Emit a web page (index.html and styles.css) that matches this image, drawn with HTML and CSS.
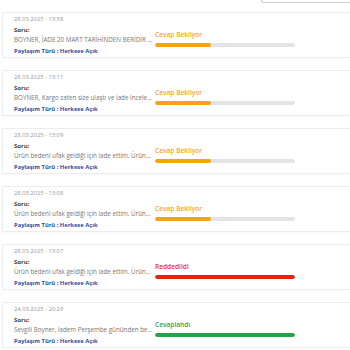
FILE: index.html
```html
<!DOCTYPE html>
<html lang="tr">
<head>
  <meta charset="UTF-8" />
  <meta name="viewport" content="width=device-width, initial-scale=1.0"/>
  <title>Sorularım</title>
  <link rel="stylesheet" href="styles.css">
</head>
<body>
  <div class="toolbar">
    <div class="search-box"></div>
  </div>

  <div class="question-list">
    <div class="question-card">
      <div class="question-info">
        <div class="date">28.03.2025 - 13:58</div>
        <div class="label">Soru:</div>
        <div class="text">BOYNER, İADE 20 MART TARİHİNDEN BERİDİR BEKLEMEDE</div>
        <div class="share">Paylaşım Türü : Herkese Açık</div>
      </div>
      <div class="status waiting">
        <div class="status-name">Cevap Bekliyor</div>
        <div class="progress"><div class="fill"></div></div>
      </div>
    </div>

    <div class="question-card">
      <div class="question-info">
        <div class="date">28.03.2025 - 13:11</div>
        <div class="label">Soru:</div>
        <div class="text">BOYNER, Kargo zaten size ulaştı ve iade incelemesi yapılmadı</div>
        <div class="share">Paylaşım Türü : Herkese Açık</div>
      </div>
      <div class="status waiting">
        <div class="status-name">Cevap Bekliyor</div>
        <div class="progress"><div class="fill"></div></div>
      </div>
    </div>

    <div class="question-card">
      <div class="question-info">
        <div class="date">28.03.2025 - 13:09</div>
        <div class="label">Soru:</div>
        <div class="text">Ürün bedeni ufak geldiği için iade ettim. Ürünün iadesi onaylanmadı</div>
        <div class="share">Paylaşım Türü : Herkese Açık</div>
      </div>
      <div class="status waiting">
        <div class="status-name">Cevap Bekliyor</div>
        <div class="progress"><div class="fill"></div></div>
      </div>
    </div>

    <div class="question-card">
      <div class="question-info">
        <div class="date">28.03.2025 - 13:08</div>
        <div class="label">Soru:</div>
        <div class="text">Ürün bedeni ufak geldiği için iade ettim. Ürünün iadesi onaylanmadı</div>
        <div class="share">Paylaşım Türü : Herkese Açık</div>
      </div>
      <div class="status waiting">
        <div class="status-name">Cevap Bekliyor</div>
        <div class="progress"><div class="fill"></div></div>
      </div>
    </div>

    <div class="question-card">
      <div class="question-info">
        <div class="date">28.03.2025 - 13:07</div>
        <div class="label">Soru:</div>
        <div class="text">Ürün bedeni ufak geldiği için iade ettim. Ürünün iadesi onaylanmadı</div>
        <div class="share">Paylaşım Türü : Herkese Açık</div>
      </div>
      <div class="status rejected">
        <div class="status-name">Reddedildi</div>
        <div class="progress"><div class="fill"></div></div>
      </div>
    </div>

    <div class="question-card">
      <div class="question-info">
        <div class="date">24.03.2025 - 20:29</div>
        <div class="label">Soru:</div>
        <div class="text">Sevgili Boyner, iadem Perşembe gününden beri bekliyor</div>
        <div class="share">Paylaşım Türü : Herkese Açık</div>
      </div>
      <div class="status answered">
        <div class="status-name">Cevaplandı</div>
        <div class="progress"><div class="fill"></div></div>
      </div>
    </div>
  </div>
</body>
</html>
```

FILE: styles.css
```css
body {
  font-family: "Open Sans", Arial, sans-serif;
  background: #fff;
  margin: 0;
  padding: 0;
  overflow: hidden;
}
.toolbar {
  height: 12px;
  display: flex;
  justify-content: flex-end;
}
.search-box {
  width: 88px;
  height: 20px;
  margin-top: -19px;
  border: 1px solid #cfcfcf;
  border-right: none;
  border-radius: 0 0 0 3px;
}
.question-list {
  display: flex;
  flex-direction: column;
  gap: 12px;
  margin-left: 2px;
}
.question-card {
  display: flex;
  gap: 2px;
  height: 44px;
  padding: 0 0 0 11px;
  border: 1px solid #ededed;
  border-right: none;
  box-shadow: 0 1px 2px rgba(0, 0, 0, 0.03);
}
.question-info {
  width: 139px;
  flex-shrink: 0;
  padding-top: 1px;
  font-size: 6px;
  line-height: 10.5px;
}
.date {
  color: #999;
  font-size: 5.8px;
}
.label {
  color: #444;
  font-weight: bold;
}
.text {
  color: #777;
  font-size: 6.25px;
  white-space: nowrap;
  overflow: hidden;
  text-overflow: ellipsis;
}
.share {
  color: #1f4fa8;
  font-size: 5.8px;
  font-weight: bold;
}
.status {
  width: 140px;
  flex-shrink: 0;
  padding-top: 17px;
}
.status-name {
  font-size: 6.6px;
  line-height: 10.5px;
  font-weight: 600;
}
.progress {
  height: 4px;
  margin-top: 2.5px;
  background-color: #e4e4e4;
  border-radius: 2px;
  overflow: hidden;
}
.fill {
  height: 100%;
  border-radius: 2px;
}
.waiting .status-name {
  color: #f5a623;
}
.waiting .fill {
  width: 40%;
  background-color: #f5a30f;
}
.rejected .status-name {
  color: #e8311c;
}
.rejected .fill {
  width: 100%;
  background-color: #e8210f;
}
.answered .status-name {
  color: #2ea44f;
}
.answered .fill {
  width: 100%;
  background-color: #25a244;
}
```
